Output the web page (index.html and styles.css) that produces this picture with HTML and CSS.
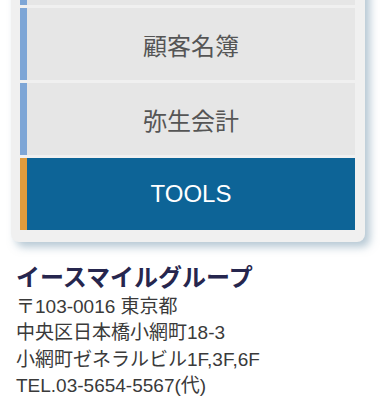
FILE: index.html
```html
<!DOCTYPE html>
<html lang="ja">
<head>
    <meta charset="UTF-8">
    <meta name="viewport" content="width=device-width, initial-scale=1.0">
    <title>メニュー</title>
    <link rel="stylesheet" href="styles.css">
</head>
<body>
    <div class="menu">
        <ul class="menu-list">
            <li class="menu-item"><a href="#">顧客管理</a></li>
            <li class="menu-item"><a href="#">顧客名簿</a></li>
            <li class="menu-item"><a href="#">弥生会計</a></li>
            <li class="menu-item active"><a href="#">TOOLS</a></li>
        </ul>
    </div>

    <div class="company">
        <h2 class="company-name">イースマイルグループ</h2>
        <p class="address">
            〒103-0016 東京都<br>
            中央区日本橋小網町18-3<br>
            小網町ゼネラルビル1F,3F,6F<br>
            TEL.03-5654-5567(代)
        </p>
    </div>
</body>
</html>
```

FILE: styles.css
```css
body {
    font-family: "Liberation Sans", "Noto Sans CJK JP", sans-serif;
    margin: 0;
    background-color: #ffffff;
}
.menu {
    width: 335px;
    margin: -76px 0 0 11px;
    padding: 9px 10px 12px 9px;
    background-color: #f0f0f0;
    border-radius: 0 0 8px 8px;
    box-shadow: 5px 5px 8px rgba(110, 145, 170, 0.5);
}
.menu-list {
    list-style: none;
    margin: 0;
    padding: 0;
    display: flex;
    flex-direction: column;
    gap: 3px;
}
.menu-item a {
    display: flex;
    justify-content: center;
    align-items: center;
    height: 72px;
    border-left: 7px solid #7ea6d6;
    background-color: #e6e6e6;
    color: #555555;
    font-size: 24px;
    text-decoration: none;
}
.menu-item.active a {
    border-left-color: #e09b3d;
    background-color: #0d6497;
    color: #ffffff;
}
.company {
    margin-top: 20px;
    padding-left: 16px;
}
.company-name {
    margin: 0;
    font-size: 24px;
    line-height: 32px;
    font-weight: bold;
    color: #26264e;
}
.address {
    margin: 0;
    font-size: 19px;
    line-height: 26.3px;
    color: #3a3a3a;
}
```
